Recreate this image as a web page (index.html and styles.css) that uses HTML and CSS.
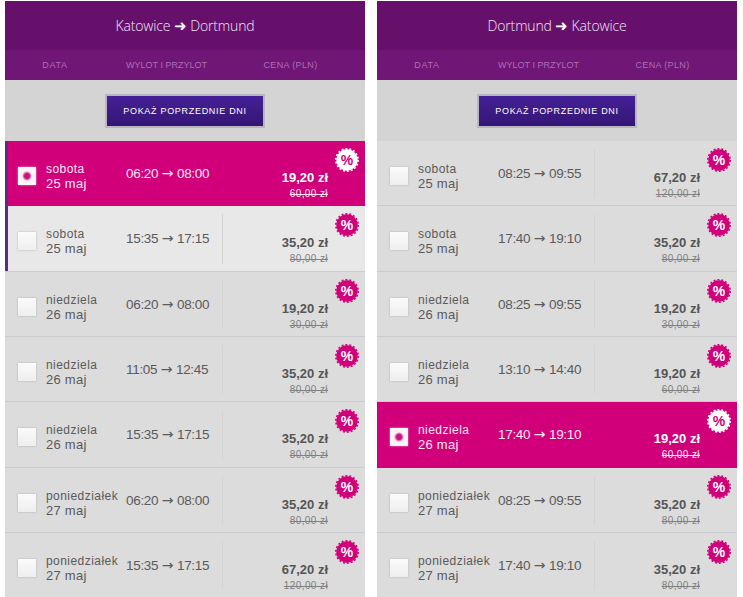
FILE: index.html
```html
<!DOCTYPE html>
<html lang="pl">
<head>
<meta charset="utf-8">
<title>Loty</title>
<link rel="stylesheet" href="styles.css">
</head>
<body>
<svg class="defs" width="0" height="0" aria-hidden="true">
  <symbol id="seal" viewBox="0 0 26 26">
    <circle cx="13" cy="13" r="10.7"/>
    <circle class="teeth" cx="13" cy="13" r="11.2"/>
  </symbol>
</svg>
<main class="page">
  <section class="panel">
    <h1 class="title">Katowice <span class="big-arrow">➜</span> Dortmund</h1>
    <div class="heads"><span class="h-date">DATA</span><span class="h-time">WYLOT I PRZYLOT</span><span class="h-price">CENA (PLN)</span></div>
    <div class="prev"><button class="prev-btn">POKAŻ POPRZEDNIE DNI</button></div>
    <div class="rows">
      <div class="row selected stripe"><span class="check"></span><div class="date">sobota<span class="day">25 maj</span></div><div class="time">06:20 <span class="ar">→</span> 08:00</div><div class="price"><b>19,20 zł</b><s>60,00 zł</s></div><div class="badge"><svg><use href="#seal"/></svg><i>%</i></div></div>
      <div class="row light stripe"><span class="check"></span><div class="date">sobota<span class="day">25 maj</span></div><div class="time">15:35 <span class="ar">→</span> 17:15</div><div class="price"><b>35,20 zł</b><s>80,00 zł</s></div><div class="badge"><svg><use href="#seal"/></svg><i>%</i></div></div>
      <div class="row"><span class="check"></span><div class="date">niedziela<span class="day">26 maj</span></div><div class="time">06:20 <span class="ar">→</span> 08:00</div><div class="price"><b>19,20 zł</b><s>30,00 zł</s></div><div class="badge"><svg><use href="#seal"/></svg><i>%</i></div></div>
      <div class="row"><span class="check"></span><div class="date">niedziela<span class="day">26 maj</span></div><div class="time">11:05 <span class="ar">→</span> 12:45</div><div class="price"><b>35,20 zł</b><s>80,00 zł</s></div><div class="badge"><svg><use href="#seal"/></svg><i>%</i></div></div>
      <div class="row"><span class="check"></span><div class="date">niedziela<span class="day">26 maj</span></div><div class="time">15:35 <span class="ar">→</span> 17:15</div><div class="price"><b>35,20 zł</b><s>80,00 zł</s></div><div class="badge"><svg><use href="#seal"/></svg><i>%</i></div></div>
      <div class="row"><span class="check"></span><div class="date">poniedziałek<span class="day">27 maj</span></div><div class="time">06:20 <span class="ar">→</span> 08:00</div><div class="price"><b>35,20 zł</b><s>80,00 zł</s></div><div class="badge"><svg><use href="#seal"/></svg><i>%</i></div></div>
      <div class="row"><span class="check"></span><div class="date">poniedziałek<span class="day">27 maj</span></div><div class="time">15:35 <span class="ar">→</span> 17:15</div><div class="price"><b>67,20 zł</b><s>120,00 zł</s></div><div class="badge"><svg><use href="#seal"/></svg><i>%</i></div></div>
    </div>
  </section>
  <section class="panel">
    <h1 class="title">Dortmund <span class="big-arrow">➜</span> Katowice</h1>
    <div class="heads"><span class="h-date">DATA</span><span class="h-time">WYLOT I PRZYLOT</span><span class="h-price">CENA (PLN)</span></div>
    <div class="prev"><button class="prev-btn">POKAŻ POPRZEDNIE DNI</button></div>
    <div class="rows">
      <div class="row"><span class="check"></span><div class="date">sobota<span class="day">25 maj</span></div><div class="time">08:25 <span class="ar">→</span> 09:55</div><div class="price"><b>67,20 zł</b><s>120,00 zł</s></div><div class="badge"><svg><use href="#seal"/></svg><i>%</i></div></div>
      <div class="row"><span class="check"></span><div class="date">sobota<span class="day">25 maj</span></div><div class="time">17:40 <span class="ar">→</span> 19:10</div><div class="price"><b>35,20 zł</b><s>80,00 zł</s></div><div class="badge"><svg><use href="#seal"/></svg><i>%</i></div></div>
      <div class="row"><span class="check"></span><div class="date">niedziela<span class="day">26 maj</span></div><div class="time">08:25 <span class="ar">→</span> 09:55</div><div class="price"><b>19,20 zł</b><s>30,00 zł</s></div><div class="badge"><svg><use href="#seal"/></svg><i>%</i></div></div>
      <div class="row"><span class="check"></span><div class="date">niedziela<span class="day">26 maj</span></div><div class="time">13:10 <span class="ar">→</span> 14:40</div><div class="price"><b>19,20 zł</b><s>60,00 zł</s></div><div class="badge"><svg><use href="#seal"/></svg><i>%</i></div></div>
      <div class="row selected"><span class="check"></span><div class="date">niedziela<span class="day">26 maj</span></div><div class="time">17:40 <span class="ar">→</span> 19:10</div><div class="price"><b>19,20 zł</b><s>60,00 zł</s></div><div class="badge"><svg><use href="#seal"/></svg><i>%</i></div></div>
      <div class="row"><span class="check"></span><div class="date">poniedziałek<span class="day">27 maj</span></div><div class="time">08:25 <span class="ar">→</span> 09:55</div><div class="price"><b>35,20 zł</b><s>80,00 zł</s></div><div class="badge"><svg><use href="#seal"/></svg><i>%</i></div></div>
      <div class="row"><span class="check"></span><div class="date">poniedziałek<span class="day">27 maj</span></div><div class="time">17:40 <span class="ar">→</span> 19:10</div><div class="price"><b>35,20 zł</b><s>80,00 zł</s></div><div class="badge"><svg><use href="#seal"/></svg><i>%</i></div></div>
    </div>
  </section>
</main>
</body>
</html>
```
FILE: styles.css
```css
html, body { margin: 0; padding: 0; background: #fff; height: 597px; overflow: hidden; }
body { font-family: "Liberation Sans", Arial, sans-serif; color: #5a5a5a; }
.defs { position: absolute; }
.page { display: flex; gap: 12px; padding: 1px 0 0 5px; }
.panel { width: 360px; flex: none; }

.title {
  margin: 0; height: 49px; background: #66106c; color: #f3e3f3;
  font: 300 14px/50px "Open Sans", sans-serif; text-align: center; letter-spacing: -0.15px;
}
.big-arrow { font-family: "DejaVu Sans", sans-serif; font-size: 15px; color: #fff; }

.heads {
  height: 30px; background: #6f1677; color: #ae6fb3;
  display: grid; grid-template-columns: 100px 123px 125px;
  font-size: 9px; line-height: 30px; text-align: center; white-space: nowrap;
}
.h-date { letter-spacing: .75px; }
.h-time { letter-spacing: 0; }
.h-price { letter-spacing: .35px; }

.prev { height: 61px; background: #d4d4d4; display: flex; justify-content: center; align-items: center; }
.prev-btn {
  width: 156px; height: 30px; padding: 0; box-sizing: content-box;
  border: 2px solid #bab5bf; border-radius: 0;
  background: linear-gradient(#45209a, #3a1a80 60%, #351677);
  color: #fff; font: 9px/30px "Liberation Sans", sans-serif; letter-spacing: .7px; white-space: nowrap;
}

.row {
  position: relative; height: 65.33px; box-sizing: border-box;
  background: #dcdcdc; border-bottom: 1px solid #c9cdd0;
  display: grid; grid-template-columns: 41px 80px 96px 106px;
}
.row::after {
  content: ""; position: absolute; left: 217px; top: 8px; bottom: 7px; width: 1px; background: #d4d4d4;
}
.row.stripe { box-shadow: inset 3px 0 0 #54307f; }
.row.light { background: #e8e8e8; }
.row.light::after { background: #d2d2d2; }
.row.selected { background: #d1007a; color: #fbe6f2; border-bottom-color: #d1007a; }
.row.selected::after { display: none; }

.check {
  display: block; width: 18px; height: 18px; margin: 26px 0 0 13px;
  background: linear-gradient(#fbfbfb, #eeeeee);
  box-shadow: 0 0 2px rgba(120,120,120,.45);
}
.selected .check {
  background: radial-gradient(circle at 50% 50%, #c8137f 0, #c8137f 2.5px, #fbf0f6 5px, #fdfdfd 100%);
  box-shadow: 0 0 2px rgba(255,255,255,.6);
}
.date {
  padding-top: 21px; font-size: 12px; line-height: 14px; letter-spacing: .45px; white-space: nowrap;
}
.day { display: block; font-size: 13px; line-height: 15px; letter-spacing: .25px; }
.time { padding-top: 25px; font-size: 13.5px; line-height: 16px; white-space: nowrap; letter-spacing: -.3px; }
.ar { font-family: "DejaVu Sans", sans-serif; font-size: 14px; line-height: 0; letter-spacing: 0; }
.price {
  display: flex; flex-direction: column; align-items: flex-end; padding: 29px 0 0;
  grid-column: 4; white-space: nowrap;
}
.price b { font-size: 13px; line-height: 15px; color: #555; }
.price s { font-size: 10px; line-height: 13px; margin-top: 2px; color: #808080; letter-spacing: .4px; }
.selected .price b { color: #fff; }
.selected .price s { color: #fbe6f2; }

.badge { position: absolute; top: 6px; right: 5px; width: 26px; height: 26px; color: #d1007a; }
.badge svg { width: 26px; height: 26px; display: block; fill: #d1007a; }
.badge i {
  position: absolute; inset: 0; text-align: center; font: 700 14px/26px "Liberation Sans", sans-serif; color: #fff;
}
.selected .badge { color: #fff; }
.selected .badge svg { fill: #fff; }
.selected .badge i { color: #d1007a; }
.teeth { fill: none; stroke: currentColor; stroke-width: 1.6; stroke-dasharray: 1.955 1.955; }
```
